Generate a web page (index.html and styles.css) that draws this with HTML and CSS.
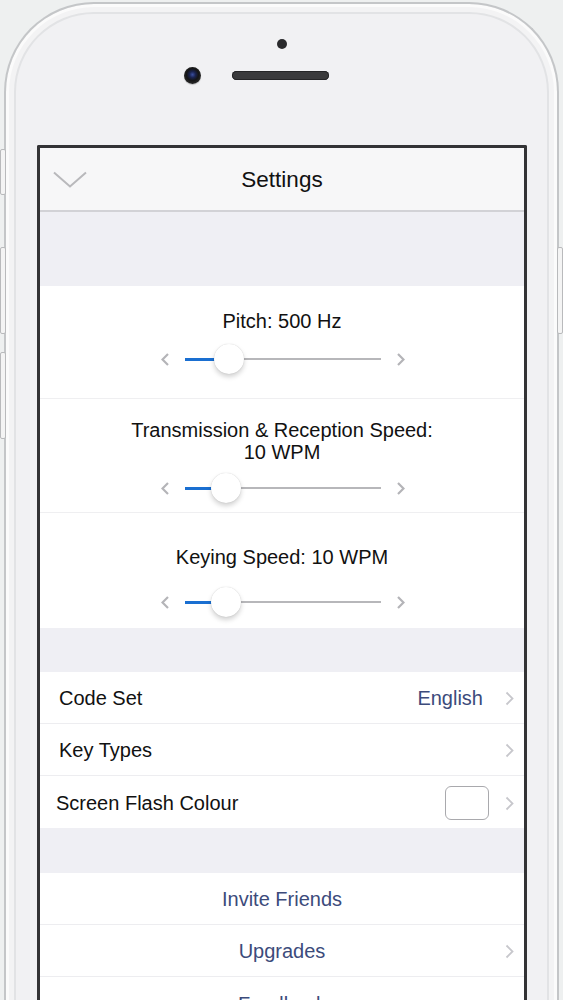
FILE: index.html
```html
<!DOCTYPE html>
<html>
<head>
<meta charset="utf-8">
<link rel="stylesheet" href="styles.css">
</head>
<body>
<div class="phone">
  <span class="btn btn-l1"></span>
  <span class="btn btn-l2"></span>
  <span class="btn btn-l3"></span>
  <span class="btn btn-r1"></span>
  <div class="top">
    <div class="sensor"></div>
    <div class="cam-row">
      <div class="camera"></div>
      <div class="speaker"></div>
    </div>
  </div>
  <div class="screen">
    <div class="navbar">
      <svg class="nav-chev" width="34" height="17" viewBox="0 0 34 17"><polyline points="1,1.5 17,15.5 33,1.5" fill="none" stroke="#b9b9bc" stroke-width="2"/></svg>
      <div class="title">Settings</div>
    </div>
    <div class="gap gap-top"></div>
    <div class="group">
      <div class="slider-row r1">
        <div class="label">Pitch: 500 Hz</div>
        <div class="slider">
          <svg width="8" height="13" viewBox="0 0 8 13"><polyline points="7,1 1.5,6.5 7,12" fill="none" stroke="#b4b4b8" stroke-width="2.2"/></svg>
          <div class="track"><div class="fill" style="width:44px"></div><div class="thumb" style="left:44px"></div></div>
          <svg width="8" height="13" viewBox="0 0 8 13"><polyline points="1,1 6.5,6.5 1,12" fill="none" stroke="#b4b4b8" stroke-width="2.2"/></svg>
        </div>
      </div>
      <div class="slider-row r2">
        <div class="label">Transmission &amp; Reception Speed:<br>10 WPM</div>
        <div class="slider">
          <svg width="8" height="13" viewBox="0 0 8 13"><polyline points="7,1 1.5,6.5 7,12" fill="none" stroke="#b4b4b8" stroke-width="2.2"/></svg>
          <div class="track"><div class="fill" style="width:41px"></div><div class="thumb" style="left:41px"></div></div>
          <svg width="8" height="13" viewBox="0 0 8 13"><polyline points="1,1 6.5,6.5 1,12" fill="none" stroke="#b4b4b8" stroke-width="2.2"/></svg>
        </div>
      </div>
      <div class="slider-row r3">
        <div class="label">Keying Speed: 10 WPM</div>
        <div class="slider">
          <svg width="8" height="13" viewBox="0 0 8 13"><polyline points="7,1 1.5,6.5 7,12" fill="none" stroke="#b4b4b8" stroke-width="2.2"/></svg>
          <div class="track"><div class="fill" style="width:41px"></div><div class="thumb" style="left:41px"></div></div>
          <svg width="8" height="13" viewBox="0 0 8 13"><polyline points="1,1 6.5,6.5 1,12" fill="none" stroke="#b4b4b8" stroke-width="2.2"/></svg>
        </div>
      </div>
    </div>
    <div class="gap gap-mid"></div>
    <div class="group">
      <div class="row">
        <span class="row-label">Code Set</span>
        <span class="row-value">English</span>
        <svg class="chev" width="9" height="15" viewBox="0 0 9 15"><polyline points="1.5,1.5 7.5,7.5 1.5,13.5" fill="none" stroke="#c7c7cc" stroke-width="1.8"/></svg>
      </div>
      <div class="row">
        <span class="row-label">Key Types</span>
        <svg class="chev" width="9" height="15" viewBox="0 0 9 15"><polyline points="1.5,1.5 7.5,7.5 1.5,13.5" fill="none" stroke="#c7c7cc" stroke-width="1.8"/></svg>
      </div>
      <div class="row">
        <span class="row-label shift">Screen Flash Colour</span>
        <span class="swatch"></span>
        <svg class="chev" width="9" height="15" viewBox="0 0 9 15"><polyline points="1.5,1.5 7.5,7.5 1.5,13.5" fill="none" stroke="#c7c7cc" stroke-width="1.8"/></svg>
      </div>
    </div>
    <div class="gap gap-mid2"></div>
    <div class="group">
      <div class="row center">
        <span class="link">Invite Friends</span>
      </div>
      <div class="row center">
        <span class="link">Upgrades</span>
        <svg class="chev abs" width="9" height="15" viewBox="0 0 9 15"><polyline points="1.5,1.5 7.5,7.5 1.5,13.5" fill="none" stroke="#c7c7cc" stroke-width="1.8"/></svg>
      </div>
      <div class="row center">
        <span class="link">Feedback</span>
      </div>
    </div>
  </div>
</div>
</body>
</html>
```
FILE: styles.css
```css
html, body {
  margin: 0;
  padding: 0;
  height: 1000px;
  overflow: hidden;
  background: #eef0f0;
  font-family: "Liberation Sans", Arial, sans-serif;
}

.phone {
  position: relative;
  margin: 2px 0 0 4px;
  width: 551px;
  height: 1100px;
  border: 2px solid #c4c6c8;
  border-bottom: none;
  border-radius: 90px 90px 0 0;
  background: #f1f1f3;
  box-shadow: inset 0 0 0 3px #fbfbfb, inset 0 0 0 8px #f3f3f4, inset 0 0 0 10px #e2e3e5;
}

.btn {
  position: absolute;
  width: 4px;
  border: 1px solid #b9babc;
  border-radius: 2px;
  background: #f4f4f4;
}
.btn-l1 { left: -6px; top: 145px; height: 44px; }
.btn-l2 { left: -6px; top: 243px; height: 85px; }
.btn-l3 { left: -6px; top: 348px; height: 85px; }
.btn-r1 { right: -6px; top: 243px; height: 85px; }

.top {
  height: 141px;
  display: flex;
  flex-direction: column;
  align-items: center;
}
.sensor {
  width: 10px;
  height: 10px;
  border-radius: 50%;
  background: #2a2a2c;
  margin-top: 35px;
  margin-left: 1px;
}
.cam-row {
  display: flex;
  align-items: center;
  margin-top: 18px;
  margin-left: -50px;
}
.camera {
  width: 17px;
  height: 17px;
  border-radius: 50%;
  background: radial-gradient(circle at 50% 45%, #3b4fa0 0, #1a2350 3px, #151515 6px, #222 8px);
  box-shadow: 0 1px 1px rgba(0,0,0,0.2);
}
.speaker {
  width: 97px;
  height: 9px;
  border-radius: 5px;
  background: #3a3a3c;
  margin-left: 31px;
  box-shadow: inset 0 0 0 1px #252527;
}

.screen {
  margin-left: 31px;
  width: 484px;
  border: 3px solid #333335;
  border-bottom: none;
  border-radius: 2px 2px 0 0;
  background: #efeff4;
}

.navbar {
  position: relative;
  height: 62px;
  background: #f7f7f8;
  border-bottom: 2px solid #d2d2d6;
  display: flex;
  align-items: center;
  justify-content: center;
}
.nav-chev {
  position: absolute;
  left: 13px;
  top: 23px;
}
.title {
  font-size: 22.5px;
  color: #111;
  margin-top: 1px;
}

.gap-top { height: 74px; }
.gap-mid { height: 44px; }
.gap-mid2 { height: 45px; }

.group { background: #fff; }

.slider-row {
  box-sizing: border-box;
  display: flex;
  flex-direction: column;
  align-items: center;
  border-bottom: 1px solid #efeff1;
}
.slider-row:last-child { border-bottom: none; }
.r1 { height: 113px; padding-top: 24px; gap: 12px; }
.r2 { height: 114px; padding-top: 20px; gap: 10px; }
.r3 { height: 115px; padding-top: 33px; gap: 19px; }

.label {
  font-size: 20px;
  line-height: 22px;
  color: #111;
  text-align: center;
}

.slider {
  display: flex;
  align-items: center;
  gap: 16px;
  height: 30px;
  margin-left: 2px;
}
.track {
  position: relative;
  width: 196px;
  height: 2px;
  background: #b7b7ba;
}
.fill {
  position: absolute;
  left: 0;
  top: -0.5px;
  height: 3px;
  background: #1a6fd1;
}
.thumb {
  position: absolute;
  top: -14px;
  width: 30px;
  height: 30px;
  margin-left: -15px;
  border-radius: 50%;
  background: #fff;
  box-shadow: 0 3px 5px rgba(0,0,0,0.18), 0 0 1px rgba(0,0,0,0.2);
}

.row {
  position: relative;
  box-sizing: border-box;
  height: 52px;
  display: flex;
  align-items: center;
  padding: 2px 10px 0 19px;
  border-bottom: 1px solid #ededf0;
}
.row:last-child { border-bottom: none; }
.row-label {
  font-size: 20px;
  color: #111;
  flex: 1;
}
.row-label.shift { margin-left: -3px; }
.row-value {
  font-size: 20px;
  color: #3c4b7b;
  margin-right: 22px;
}
.swatch {
  width: 42px;
  height: 32px;
  border: 1px solid #a9a9ad;
  border-radius: 6px;
  margin-right: 16px;
}
.chev { flex: none; }

.row.center {
  justify-content: center;
  padding: 2px 0 0 0;
}
.link {
  font-size: 20px;
  color: #3c4b7b;
}
.chev.abs {
  position: absolute;
  right: 10px;
  top: 19px;
}
```
